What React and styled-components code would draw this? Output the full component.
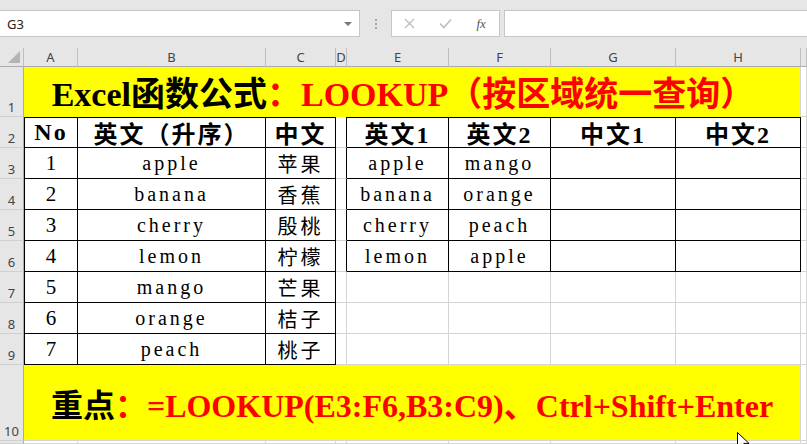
import React from 'react'
import styled, { createGlobalStyle, css } from 'styled-components'

const SERIF = `"Liberation Serif", "Noto Sans CJK SC", serif`
const UI = `"Noto Sans", "Liberation Sans", sans-serif`
const GRID = '#d4d4d4'

const GlobalStyle = createGlobalStyle`
    html, body {
        margin: 0;
        padding: 0;
        background: #fff;
        overflow: hidden;
    }
`

const Page = styled.div`
    position: relative;
    width: 807px;
    height: 444px;
    overflow: hidden;
    background: #fff;
    display: flex;
    flex-direction: column;
`
const Toolbar = styled.div`
    flex: none;
    height: 48px;
    box-sizing: border-box;
    padding-top: 10px;
    background: #e6e6e6;
    display: flex;
    align-items: flex-start;
`
const NameBox = styled.div`
    width: 360px;
    height: 27px;
    box-sizing: border-box;
    background: #fff;
    border: 1px solid #c6c6c6;
    border-left: none;
    display: flex;
    align-items: center;
    justify-content: space-between;
    padding: 0 7px 0 7px;
    font: 13px ${UI};
    color: #222;
`
const DropArrow = styled.span`
    width: 0;
    height: 0;
    border-left: 4px solid transparent;
    border-right: 4px solid transparent;
    border-top: 4px solid #777;
`
const Grip = styled.div`
    width: 31px;
    height: 27px;
    display: flex;
    flex-direction: column;
    align-items: center;
    justify-content: center;
    gap: 2px;
`
const Dot = styled.span`
    width: 2px;
    height: 2px;
    background: #a6a6a6;
`
const FxBox = styled.div`
    width: 109px;
    height: 27px;
    box-sizing: border-box;
    background: #fff;
    border: 1px solid #c6c6c6;
    display: flex;
    align-items: center;
`
const ToolSlot = styled.span`
    width: 36px;
    display: flex;
    justify-content: center;
    align-items: center;
    font: italic 13px "Liberation Serif", serif;
    color: #555;
`
const FormulaInput = styled.div`
    flex: 1;
    margin-left: 4px;
    height: 27px;
    box-sizing: border-box;
    background: #fff;
    border: 1px solid #c6c6c6;
    border-right: none;
`

const Sheet = styled.div`
    flex: 1;
    min-height: 0;
    display: grid;
    grid-template-columns: 24px 54px 188px 70px 11px 102px 102px 125px 125px 1fr;
    grid-template-rows: 19px 50px repeat(8, 31px) 76px 1fr;
`
const Corner = styled.div`
    box-sizing: border-box;
    background: #e6e6e6;
    border-right: 1px solid #bfbfbf;
    border-bottom: 1px solid #ababab;
    display: flex;
    align-items: flex-end;
    justify-content: flex-end;
    padding: 0 3px 3px 0;
`
const ColHead = styled.div`
    box-sizing: border-box;
    background: #e6e6e6;
    border-right: 1px solid #bfbfbf;
    border-bottom: 1px solid #ababab;
    display: flex;
    align-items: center;
    justify-content: center;
    font: 13px ${UI};
    color: #444;
`
const RowHead = styled.div`
    box-sizing: border-box;
    background: #e6e6e6;
    border-right: 1px solid #ababab;
    border-bottom: 1px solid #d0d0d0;
    display: flex;
    align-items: flex-end;
    justify-content: center;
    padding-bottom: 1px;
    font: 13px ${UI};
    line-height: 16px;
    color: #444;
`

const kinds = {
    head: css`
        font-family: ${SERIF};
        font-weight: 700;
        font-size: 24px;
        letter-spacing: 2px;
    `,
    num: css`
        font-family: ${SERIF};
        font-size: 21px;
    `,
    en: css`
        font-family: ${SERIF};
        font-size: 20px;
        letter-spacing: 3px;
    `,
    zh: css`
        font-family: "Noto Sans CJK SC", sans-serif;
        font-weight: 400;
        font-size: 20px;
        letter-spacing: 3px;
    `,
}

const Cell = styled.div`
    box-sizing: border-box;
    min-width: 0;
    overflow: hidden;
    white-space: nowrap;
    display: flex;
    align-items: center;
    justify-content: center;
    color: #000;
    border-right: 1px solid ${({ $r }) => ($r ? '#000' : GRID)};
    border-bottom: 1px solid ${({ $b }) => ($b ? '#000' : GRID)};
    border-top: ${({ $t }) => ($t ? '1px solid #000' : '0')};
    border-left: ${({ $l }) => ($l ? '1px solid #000' : '0')};
    ${({ $kind }) => kinds[$kind]}
`
const Banner = styled.div`
    grid-column: 2 / span 8;
    box-sizing: border-box;
    background: #ffff00;
    border-right: 1px solid ${GRID};
    border-bottom: 1px solid ${({ $closed }) => ($closed ? GRID : '#ffff00')};
    display: flex;
    align-items: center;
    justify-content: center;
    padding-right: ${({ $shift }) => $shift || 0}px;
    white-space: nowrap;
    font-family: ${SERIF};
    font-weight: 700;
    font-size: ${({ $size }) => $size}px;
    color: #000;
`
const Red = styled.span`
    color: #ff0000;
`
const Pointer = styled.svg`
    position: absolute;
    left: 737px;
    top: 432px;
`

const letters = ['A', 'B', 'C', 'D', 'E', 'F', 'G', 'H', '']

const leftTable = [
    ['No', '英文（升序）', '中文'],
    ['1', 'apple', '苹果'],
    ['2', 'banana', '香蕉'],
    ['3', 'cherry', '殷桃'],
    ['4', 'lemon', '柠檬'],
    ['5', 'mango', '芒果'],
    ['6', 'orange', '桔子'],
    ['7', 'peach', '桃子'],
]

const rightTable = [
    ['英文1', '英文2', '中文1', '中文2'],
    ['apple', 'mango', '', ''],
    ['banana', 'orange', '', ''],
    ['cherry', 'peach', '', ''],
    ['lemon', 'apple', '', ''],
]

function TableRow({ index }) {
    const head = index === 0
    const left = leftTable[index]
    const right = rightTable[index]
    const leftKinds = head ? ['head', 'head', 'head'] : ['num', 'en', 'zh']
    return (
        <>
            <RowHead>{index + 2}</RowHead>
            {left.map((text, i) => (
                <Cell key={'l' + i} $kind={leftKinds[i]} $r $b $t={head} $l={i === 0}>
                    {text}
                </Cell>
            ))}
            <Cell $r={!!right} />
            {right
                ? right.map((text, i) => (
                      <Cell key={'r' + i} $kind={head ? 'head' : 'en'} $r $b $t={head}>
                          {text}
                      </Cell>
                  ))
                : [0, 1, 2, 3].map((i) => <Cell key={'r' + i} />)}
            <Cell />
        </>
    )
}

export default function App() {
    return (
        <Page>
            <GlobalStyle />
            <Toolbar>
                <NameBox>
                    G3
                    <DropArrow />
                </NameBox>
                <Grip>
                    <Dot />
                    <Dot />
                    <Dot />
                </Grip>
                <FxBox>
                    <ToolSlot>
                        <svg width="11" height="11" viewBox="0 0 11 11">
                            <path d="M1 1 L10 10 M10 1 L1 10" stroke="#bdbdbd" strokeWidth="1.3" fill="none" />
                        </svg>
                    </ToolSlot>
                    <ToolSlot>
                        <svg width="13" height="11" viewBox="0 0 13 11">
                            <path d="M1 5.5 L4.8 9.5 L12 1.5" stroke="#bdbdbd" strokeWidth="1.6" fill="none" />
                        </svg>
                    </ToolSlot>
                    <ToolSlot>fx</ToolSlot>
                </FxBox>
                <FormulaInput />
            </Toolbar>

            <Sheet>
                <Corner>
                    <svg width="12" height="12" viewBox="0 0 12 12">
                        <path d="M12 0 L12 12 L0 12 Z" fill="#b4b4b4" />
                    </svg>
                </Corner>
                {letters.map((l, i) => (
                    <ColHead key={i}>{l}</ColHead>
                ))}

                <RowHead>1</RowHead>
                <Banner $size={34} $shift={18}>
                    Excel函数公式<Red>：LOOKUP（按区域统一查询）</Red>
                </Banner>
                <Cell />

                {leftTable.map((_, i) => (
                    <TableRow key={i} index={i} />
                ))}

                <RowHead>10</RowHead>
                <Banner $size={32} $closed>
                    重点<Red>：=LOOKUP(E3:F6,B3:C9)、Ctrl+Shift+Enter</Red>
                </Banner>
                <Cell />

                <RowHead />
                {letters.map((_, i) => (
                    <Cell key={i} />
                ))}
            </Sheet>

            <Pointer width="14" height="20" viewBox="0 0 14 20">
                <path d="M0.5 0.5 L0.5 16 L4.5 12.2 L7.2 18.5 L9.4 17.5 L6.8 11.4 L12 11.4 Z" fill="#fff" stroke="#000" strokeWidth="1" />
            </Pointer>
        </Page>
    )
}
